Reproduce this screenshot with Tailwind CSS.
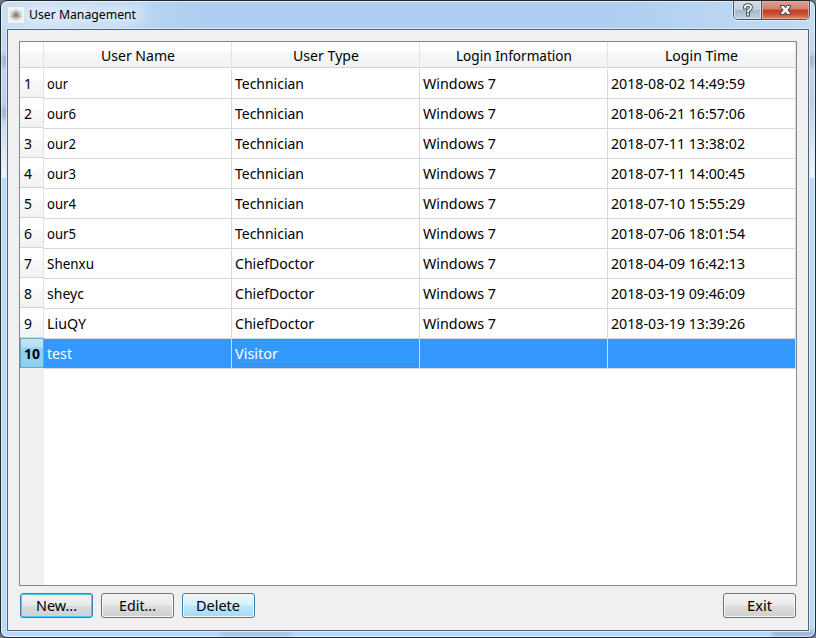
<!DOCTYPE html>
<html lang="en">
<head>
<meta charset="utf-8">
<title>User Management</title>
<script src="https://cdn.jsdelivr.net/npm/@tailwindcss/browser@4"></script>
</head>
<body class="w-[816px] h-[638px] overflow-hidden bg-[#777b80] font-['Noto_Sans',sans-serif] text-[14px] text-black">
<div class="relative flex flex-col w-[816px] h-[638px] rounded-[7px] border border-[#20252c] bg-[#b9d8fa] shadow-[inset_0_0_0_1px_#e4f1fc] overflow-hidden">
  <div class="absolute left-px top-[28px] w-[5px] h-[149px] bg-linear-to-b from-[#c5daef] via-[#bdd1e8] to-[#edf5fd]"></div>
  <div class="absolute right-px top-[28px] w-[5px] h-[149px] bg-linear-to-b from-[#c5daef] via-[#bdd1e8] to-[#edf5fd]"></div>
  <div class="absolute left-px top-[54px] w-[5px] h-[12px] bg-[#8294a8]/60 blur-[2px]"></div>
  <div class="absolute left-px top-[106px] w-[5px] h-[12px] bg-[#8294a8]/60 blur-[2px]"></div>
  <div class="absolute right-px top-[54px] w-[5px] h-[12px] bg-[#8294a8]/60 blur-[2px]"></div>
  <div class="absolute left-[220px] bottom-px w-[70px] h-[4px] bg-[#8fa9c4]/60 blur-[2px]"></div>
  <div class="absolute right-px bottom-px w-[42px] h-[5px] bg-[#8098b5]/60 blur-[2px]"></div>

  <header class="relative mx-px mt-px flex h-[26px] mb-px shrink-0 items-center bg-[linear-gradient(to_right,#c9dff4_0,#aecff1_25%,#aecff1_75%,#c3dbf3_100%)] rounded-t-[6px]">
    <div class="absolute left-[20px] top-[3px] w-[124px] h-[20px] rounded-full bg-white/45 blur-[7px]"></div>
    <svg class="relative ml-[6px] shrink-0" width="16" height="16" viewBox="0 0 16 16">
      <defs><radialGradient id="g"><stop offset="0" stop-color="#596056"/><stop offset=".35" stop-color="#a5a8a2"/><stop offset=".8" stop-color="#dfe0df"/><stop offset="1" stop-color="#f1f1f1"/></radialGradient></defs>
      <rect width="16" height="16" fill="#f3f3f2"/><ellipse cx="8" cy="8" rx="7" ry="6.5" fill="url(#g)"/><path d="M3 10Q8 7 13 10" stroke="#8b8e87" stroke-opacity=".5" fill="none"/>
    </svg>
    <h1 class="relative ml-[5px] text-[12px] leading-[16px] whitespace-nowrap"><svg class="block" width="112" height="18"><text x="0" y="13" textLength="107" lengthAdjust="spacingAndGlyphs" class="text-[12px]">User Management</text></svg></h1>
    <div class="absolute right-[4px] -top-px flex h-[19px] w-[77px] rounded-b-[5px] border border-t-0 border-[#465061] overflow-hidden shadow-[0_0_0_1px_#e0edf9]">
      <div class="flex w-[28px] items-center justify-center border-r border-[#465061] bg-[linear-gradient(#d3dde9_0%,#c4d0de_48%,#a5b6c9_52%,#c4d4e6_100%)] shadow-[inset_0_0_0_1px_#dce6f1]">
        <svg width="12" height="14" viewBox="0 0 12 14" fill="none" stroke-linecap="square" stroke-linejoin="round">
          <path d="M3 4.5V4Q3 2.2 6 2.2T9 4.5Q9 6 7.3 6.8Q6 7.5 6 8.5M6 11.5V11.6" stroke="#47505f" stroke-width="3.8"/>
          <path d="M3 4.5V4Q3 2.2 6 2.2T9 4.5Q9 6 7.3 6.8Q6 7.5 6 8.5M6 11.5V11.6" stroke="#fff" stroke-width="1.8"/>
        </svg>
      </div>
      <div class="flex flex-1 items-center justify-center bg-[linear-gradient(#e0a092_0%,#d4806c_45%,#bf3c20_50%,#cf5437_75%,#de8a6b_100%)] shadow-[inset_0_0_0_1px_#e6aa9c]">
        <svg width="13" height="12" viewBox="0 0 13 12" stroke-linejoin="round">
          <path d="M1.5 1.5H5L6.5 3.5 8 1.5H11.5V3L9 6 11.5 9V10.5H8L6.5 8.5 5 10.5H1.5V9L4 6 1.5 3Z" fill="#fff" stroke="#4c4650" stroke-width="1.1"/>
        </svg>
      </div>
    </div>
  </header>

  <main class="relative mx-[6px] h-[602px] shrink-0 border border-[#566477] bg-[#f0f0f0] shadow-[0_0_0_1px_#d8eafa] px-[11px] pt-[11px]">
    <div class="h-[545px] w-[778px] border border-[#828790] bg-white flex flex-col">
      <div id="head" class="flex h-[26px] shrink-0 border-b border-[#d5d5d5] bg-[linear-gradient(#fff_0,#fff_9px,#f7f8fa_10px,#f1f2f4_25px)]"></div>
      <div class="flex flex-1">
        <div id="nums" class="w-[24px] bg-[#f0f0f0]"></div>
        <div id="rows" class="flex-1 pt-px"></div>
      </div>
    </div>
    <div class="mt-[7px] ml-px flex w-[776px] gap-[8px]">
      <button class="flex h-[25px] w-[73px] items-center justify-center rounded-[3px] border border-[#3c7fb1] bg-[linear-gradient(#f2f2f2_0,#e9ebeb_48%,#d8dcde_52%,#cfd2d3_100%)] shadow-[inset_0_0_0_1px_#44cdf5]"><svg class="block" width="71" height="23"><text x="15" y="17" textLength="41" lengthAdjust="spacingAndGlyphs">New...</text></svg></button>
      <button class="flex h-[25px] w-[73px] items-center justify-center rounded-[3px] border border-[#707070] bg-[linear-gradient(#f2f2f2_0,#ebebeb_48%,#dddddd_52%,#cfcfcf_100%)] shadow-[inset_0_0_0_1px_#f8f8f8]"><svg class="block" width="71" height="23"><text x="17" y="17" textLength="37" lengthAdjust="spacingAndGlyphs">Edit...</text></svg></button>
      <button class="flex h-[25px] w-[73px] items-center justify-center rounded-[3px] border border-[#3c7fb1] bg-[linear-gradient(#eaf6fd_0,#d9f0fc_48%,#bee6fd_52%,#a7d9f5_100%)] shadow-[inset_0_0_0_1px_#effaff]"><svg class="block" width="71" height="23"><text x="13" y="17" textLength="44" lengthAdjust="spacingAndGlyphs">Delete</text></svg></button>
      <button class="ml-auto flex h-[25px] w-[73px] items-center justify-center rounded-[3px] border border-[#707070] bg-[linear-gradient(#f2f2f2_0,#ebebeb_48%,#dddddd_52%,#cfcfcf_100%)] shadow-[inset_0_0_0_1px_#f8f8f8]"><svg class="block" width="71" height="23"><text x="23" y="17" textLength="25" lengthAdjust="spacingAndGlyphs">Exit</text></svg></button>
    </div>
  </main>
</div>
<script>
const label = (t, x, y, w, W, H) => t ? `<svg class="block" width="${W}" height="${H}"><text x="${x}" y="${y}" textLength="${w}" lengthAdjust="spacingAndGlyphs" fill="currentColor">${t}</text></svg>` : '';
document.getElementById('head').innerHTML =
  '<div class="w-[24px] border-r border-[#e2e3e5]"></div>' +
  [['User Name',57,74],['User Type',61,66],['Login Information',36,116],['Login Time',57,73]]
    .map(([t,x,w]) => `<div class="w-[188px] border-r border-[#e2e3e5]">${label(t,x,19,w,187,25)}</div>`).join('');
const D = [['our',21],['our6',29],['our2',29],['our3',29],['our4',29],['our5',29],['Shenxu',47],['sheyc',37],['LiuQY',39],['test',25]];
const T = ['2018-08-02 14:49:59','2018-06-21 16:57:06','2018-07-11 13:38:02','2018-07-11 14:00:45','2018-07-10 15:55:29','2018-07-06 18:01:54','2018-04-09 16:42:13','2018-03-19 09:46:09','2018-03-19 13:39:26',''];
document.getElementById('nums').innerHTML = D.map((_, i) => i < 9
  ? `<div class="h-[30px] border-b border-r border-b-[#d5d5d5] border-r-[#e2e3e5] bg-[linear-gradient(#fff_0,#fff_11px,#f7f8fa_12px,#f1f2f4_29px)]">${label(i+1,4,21,8,23,29)}</div>`
  : `<div class="h-[30px] border border-[#6fa5bd] bg-[linear-gradient(#bfe5f5_0,#b4e0f4_8px,#8fd2f2_9px,#8bd0f2_28px)] font-bold">${label(10,3,20,16,22,28)}</div>`).join('');
document.getElementById('rows').innerHTML = D.map(([n, w], i) => {
  const type = i < 6 ? ['Technician',69] : i < 9 ? ['ChiefDoctor',79] : ['Visitor',43];
  const c = [[n,w], type, i < 9 ? ['Windows 7',73] : ['',0], [T[i],134]];
  return `<div class="flex h-[30px] ${i === 9 ? 'bg-[#3399ff] text-white' : ''}">` + c.map(([t,w],j) =>
    i === 9 && j === 1
      ? `<div class="h-[30px] w-[188px] border-r border-b border-[#d8d8d8] pl-px"><div class="h-[29px] w-[186px] border border-dotted border-[#cc6600]">${label(t,1,19,w,180,27)}</div></div>`
      : `<div class="h-[30px] w-[188px] border-r border-b border-[#d8d8d8]">${label(t,3,20,w,187,29)}</div>`).join('') + '</div>';
}).join('');
</script>
</body>
</html>
